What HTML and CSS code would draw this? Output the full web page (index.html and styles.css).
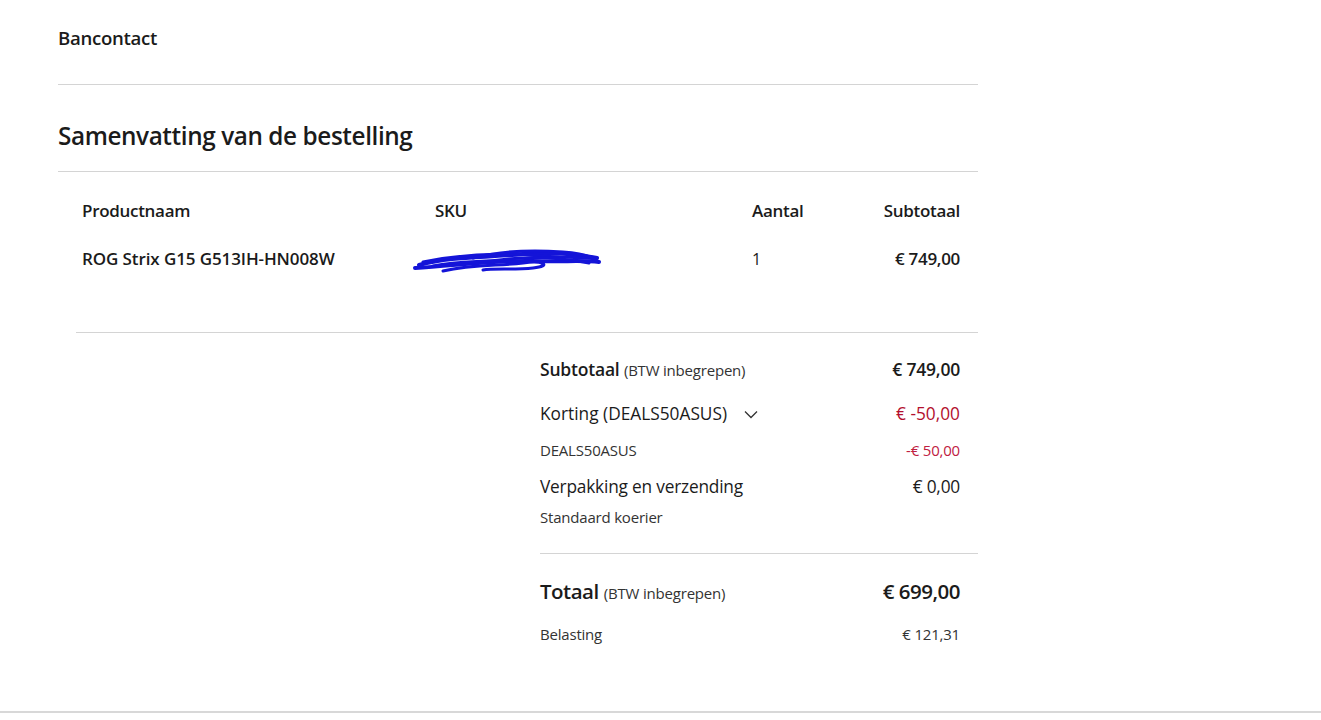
FILE: index.html
```html
<!DOCTYPE html>
<html lang="nl">
<head>
<meta charset="utf-8">
<title>Samenvatting van de bestelling</title>
<link rel="stylesheet" href="styles.css">
</head>
<body>
<main class="page">
  <section class="payment">Bancontact</section>
  <h2 class="title">Samenvatting van de bestelling</h2>
  <div class="items">
    <div class="cell head">Productnaam</div>
    <div class="cell head">SKU</div>
    <div class="cell head">Aantal</div>
    <div class="cell head right">Subtotaal</div>
    <div class="cell name">ROG Strix G15 G513IH-HN008W</div>
    <div class="cell sku">
      <svg class="scribble" width="190" height="30" viewBox="0 0 190 30">
        <path d="M6 19 C40 10 70 12 110 8 C140 6 165 8 184 12" fill="none" stroke="#1414d8" stroke-width="4" stroke-linecap="round"/>
        <path d="M2 22 C40 20 80 14 120 15 C150 16 170 14 186 16" fill="none" stroke="#1414d8" stroke-width="4" stroke-linecap="round"/>
        <path d="M10 16 C50 8 90 6 130 10 C160 12 175 11 182 13" fill="none" stroke="#1414d8" stroke-width="3" stroke-linecap="round"/>
        <path d="M30 25 C60 18 85 20 110 17 C130 14 140 20 120 22 C100 24 80 22 70 24" fill="none" stroke="#1414d8" stroke-width="3" stroke-linecap="round"/>
        <path d="M60 12 C90 4 120 4 150 6 C165 7 178 10 184 15" fill="none" stroke="#1414d8" stroke-width="3" stroke-linecap="round"/>
        <path d="M20 20 C50 14 70 17 95 13 C120 10 150 12 176 17" fill="none" stroke="#1414d8" stroke-width="3" stroke-linecap="round"/>
      </svg>
    </div>
    <div class="cell qty">1</div>
    <div class="cell price right">€ 749,00</div>
  </div>
  <div class="summary">
    <div class="row r-sub">
      <span><b>Subtotaal</b> <small>(BTW inbegrepen)</small></span>
      <b>€ 749,00</b>
    </div>
    <div class="row r-disc">
      <span>Korting (DEALS50ASUS)
        <svg class="chev" width="14" height="9" viewBox="0 0 14 9"><polyline points="1,1.5 7,7.5 13,1.5" fill="none" stroke="#333" stroke-width="1.3"/></svg>
      </span>
      <span class="red">€ -50,00</span>
    </div>
    <div class="row r-code">
      <span>DEALS50ASUS</span>
      <span class="red-light">-€ 50,00</span>
    </div>
    <div class="row r-ship">
      <span>Verpakking en verzending</span>
      <span>€ 0,00</span>
    </div>
    <div class="row r-carrier">
      <span>Standaard koerier</span>
    </div>
    <div class="row r-total">
      <span><b>Totaal</b> <small>(BTW inbegrepen)</small></span>
      <b>€ 699,00</b>
    </div>
    <div class="row r-tax">
      <span>Belasting</span>
      <span>€ 121,31</span>
    </div>
  </div>
</main>
<footer class="foot"></footer>
</body>
</html>
```

FILE: styles.css
```css
html, body {
  margin: 0;
  padding: 0;
  background: #fff;
}
body {
  font-family: "Open Sans", "Noto Sans", sans-serif;
  color: #1b1b1b;
}
.page {
  width: 920px;
  margin-left: 58px;
}
.payment {
  box-sizing: border-box;
  height: 85px;
  padding-top: 26px;
  font-size: 18.6px;
  line-height: 24px;
  font-weight: 600;
  letter-spacing: -0.3px;
  border-bottom: 1px solid #d4d4d4;
}
.title {
  margin: 35px 0 0;
  padding-bottom: 19px;
  font-size: 24.3px;
  line-height: 32px;
  font-weight: 600;
  letter-spacing: -0.4px;
  border-bottom: 1px solid #d4d4d4;
}
.items {
  display: grid;
  grid-template-columns: 353px 317px 1fr auto;
  row-gap: 24px;
  padding: 27px 18px 61px 6px;
  margin-left: 18px;
  font-size: 17px;
  line-height: 24px;
  letter-spacing: -0.3px;
  border-bottom: 1px solid #d4d4d4;
}
.cell.head { font-weight: 600; }
.cell.name { font-weight: 600; letter-spacing: -0.1px; }
.cell.qty { font-size: 16px; }
.cell.price { font-weight: 600; }
.cell.right { text-align: right; }
.cell.sku { position: relative; }
.scribble {
  position: absolute;
  left: -22px;
  top: -1px;
}
.summary {
  margin-left: 482px;
  padding-right: 18px;
  letter-spacing: -0.2px;
}
.row {
  display: flex;
  justify-content: space-between;
  align-items: baseline;
}
.row b { font-weight: 600; }
.row small { font-size: 15px; color: #333; }
.r-sub { margin-top: 24px; font-size: 17.5px; line-height: 24px; }
.r-disc { margin-top: 20px; font-size: 17.3px; line-height: 24px; letter-spacing: 0; }
.r-code { margin-top: 13px; font-size: 15px; line-height: 22px; color: #333; }
.r-ship { margin-top: 14px; font-size: 17.3px; line-height: 24px; }
.r-carrier { margin-top: 8px; font-size: 15px; line-height: 20px; color: #333;
  padding-bottom: 26px; border-bottom: 1px solid #d4d4d4; margin-right: -18px; padding-right: 18px; }
.r-total { margin-top: 23px; font-size: 20.5px; line-height: 28px; }
.r-total b { letter-spacing: -0.5px; }
.r-tax { margin-top: 17px; font-size: 15px; line-height: 20px; color: #333; }
.chev { margin-left: 12px; vertical-align: 1px; }
.red { color: #b3102e; }
.red-light { color: #c0203f; }
.foot {
  margin-top: 67px;
  border-top: 2px solid #d8d8d8;
  height: 8px;
}
```
